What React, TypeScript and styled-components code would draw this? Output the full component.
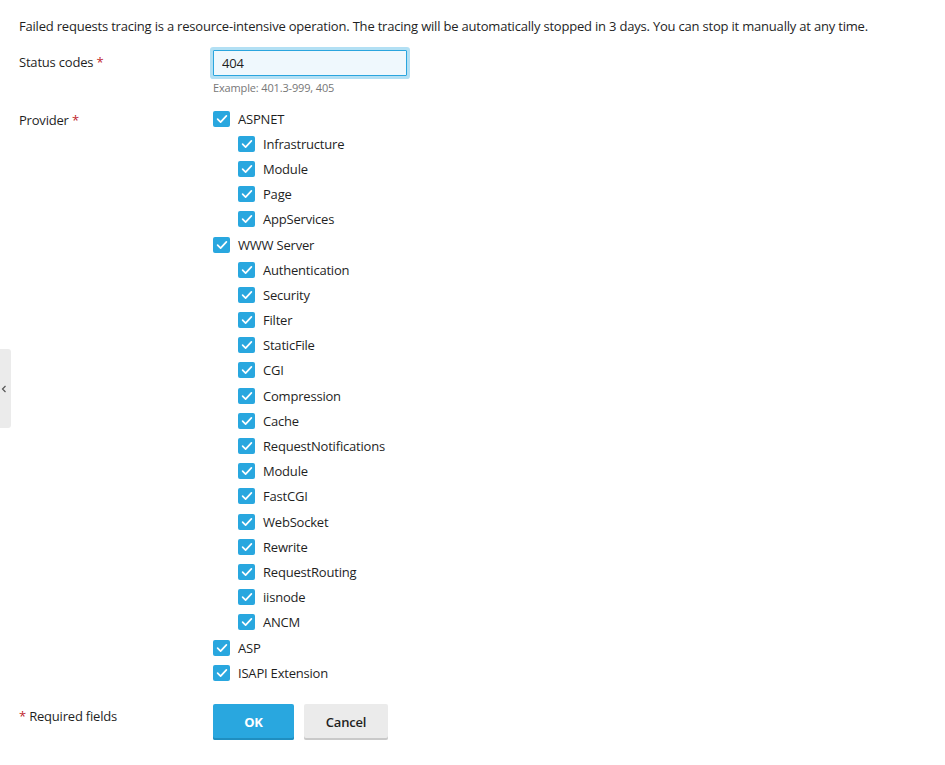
import React from "react";
import styled, { createGlobalStyle } from "styled-components";

const Global = createGlobalStyle`
  html, body { margin: 0; padding: 0; background: #fff; }
  body { font-family: "Open Sans", "DejaVu Sans", sans-serif; font-size: 13px; letter-spacing: -0.2px; color: #1f1f1f; }
  * { box-sizing: border-box; }
`;

const Page = styled.div`
  padding: 17px 19px 0 19px;
  width: 945px;
  height: 765px;
`;

const Intro = styled.p`
  margin: 0;
  line-height: 18px;
`;

const FormRow = styled.div<{ $top: number }>`
  display: grid;
  grid-template-columns: 194px 1fr;
  margin-top: ${(p) => p.$top}px;
  align-items: start;
`;

const Label = styled.div<{ $lh: number }>`
  line-height: ${(p) => p.$lh}px;
`;

const Req = styled.span`
  color: #c0262d;
`;

const Field = styled.div`
  display: flex;
  flex-direction: column;
`;

const Input = styled.input`
  width: 194px;
  height: 26px;
  border: 1px solid #2aa5de;
  background: #eff8fd;
  box-shadow: 0 0 0 3px #b3e0f4;
  border-radius: 1px;
  padding: 0 8px;
  font-family: "Open Sans", sans-serif;
  font-size: 13px;
  letter-spacing: -0.2px;
  color: #1f1f1f;
  outline: none;
`;

const Hint = styled.div`
  margin-top: 4px;
  font-size: 11px;
  line-height: 15px;
  letter-spacing: -0.15px;
  color: #777;
`;

const List = styled.div`
  display: flex;
  flex-direction: column;
`;

const CheckRow = styled.label<{ $indent: boolean }>`
  display: flex;
  align-items: center;
  gap: 8px;
  height: 25.2px;
  padding-left: ${(p) => (p.$indent ? 25 : 0)}px;
  cursor: pointer;
`;

const Box = styled.span`
  width: 17px;
  height: 16px;
  border-radius: 2px;
  background: #29a7df;
  display: flex;
  align-items: center;
  justify-content: center;
  flex-shrink: 0;
`;

const Buttons = styled.div`
  display: flex;
  gap: 10px;
`;

const Button = styled.button<{ $primary?: boolean }>`
  height: 36px;
  border: none;
  border-radius: 2px;
  font-family: "Open Sans", sans-serif;
  font-size: 13px;
  letter-spacing: -0.2px;
  font-weight: ${(p) => (p.$primary ? 700 : 600)};
  padding: 0;
  width: ${(p) => (p.$primary ? 81 : 84)}px;
  background: ${(p) => (p.$primary ? "#29a7df" : "#ebebeb")};
  color: ${(p) => (p.$primary ? "#fff" : "#1f1f1f")};
  box-shadow: inset 0 -2px 0 ${(p) => (p.$primary ? "#1f8ec0" : "#c9c9c9")};
`;

const SideTab = styled.div`
  position: absolute;
  left: 0;
  top: 349px;
  width: 11px;
  height: 79px;
  background: #ebebeb;
  border-radius: 0 3px 3px 0;
  display: flex;
  align-items: center;
  justify-content: flex-start;
  padding-left: 1px;
`;

const Check = () => (
  <svg width="12" height="12" viewBox="0 0 12 12">
    <path d="M1.6 6.2 L4.6 9.1 L10.4 2.8" fill="none" stroke="#fff" strokeWidth="1.7" strokeLinecap="round" strokeLinejoin="round" />
  </svg>
);

const items: [string, boolean][] = [
  ["ASPNET", false],
  ["Infrastructure", true],
  ["Module", true],
  ["Page", true],
  ["AppServices", true],
  ["WWW Server", false],
  ["Authentication", true],
  ["Security", true],
  ["Filter", true],
  ["StaticFile", true],
  ["CGI", true],
  ["Compression", true],
  ["Cache", true],
  ["RequestNotifications", true],
  ["Module", true],
  ["FastCGI", true],
  ["WebSocket", true],
  ["Rewrite", true],
  ["RequestRouting", true],
  ["iisnode", true],
  ["ANCM", true],
  ["ASP", false],
  ["ISAPI Extension", false],
];

export default function App() {
  return (
    <>
      <Global />
      <SideTab>
        <svg width="6" height="8" viewBox="0 0 6 8">
          <path d="M4.5 1 L1.5 4 L4.5 7" fill="none" stroke="#555" strokeWidth="1.2" />
        </svg>
      </SideTab>
      <Page>
        <Intro>
          Failed requests tracing is a resource-intensive operation. The tracing will be automatically stopped in 3 days. You can stop it manually at any time.
        </Intro>
        <FormRow $top={15}>
          <Label $lh={25}>
            Status codes <Req>*</Req>
          </Label>
          <Field>
            <Input defaultValue="404" />
            <Hint>Example: 401.3-999, 405</Hint>
          </Field>
        </FormRow>
        <FormRow $top={11}>
          <Label $lh={28}>
            Provider <Req>*</Req>
          </Label>
          <List>
            {items.map(([name, indent], i) => (
              <CheckRow key={i} $indent={indent}>
                <Box>
                  <Check />
                </Box>
                {name}
              </CheckRow>
            ))}
          </List>
        </FormRow>
        <FormRow $top={19}>
          <Label $lh={24}>
            <Req>*</Req> Required fields
          </Label>
          <Buttons>
            <Button $primary>OK</Button>
            <Button>Cancel</Button>
          </Buttons>
        </FormRow>
      </Page>
    </>
  );
}
